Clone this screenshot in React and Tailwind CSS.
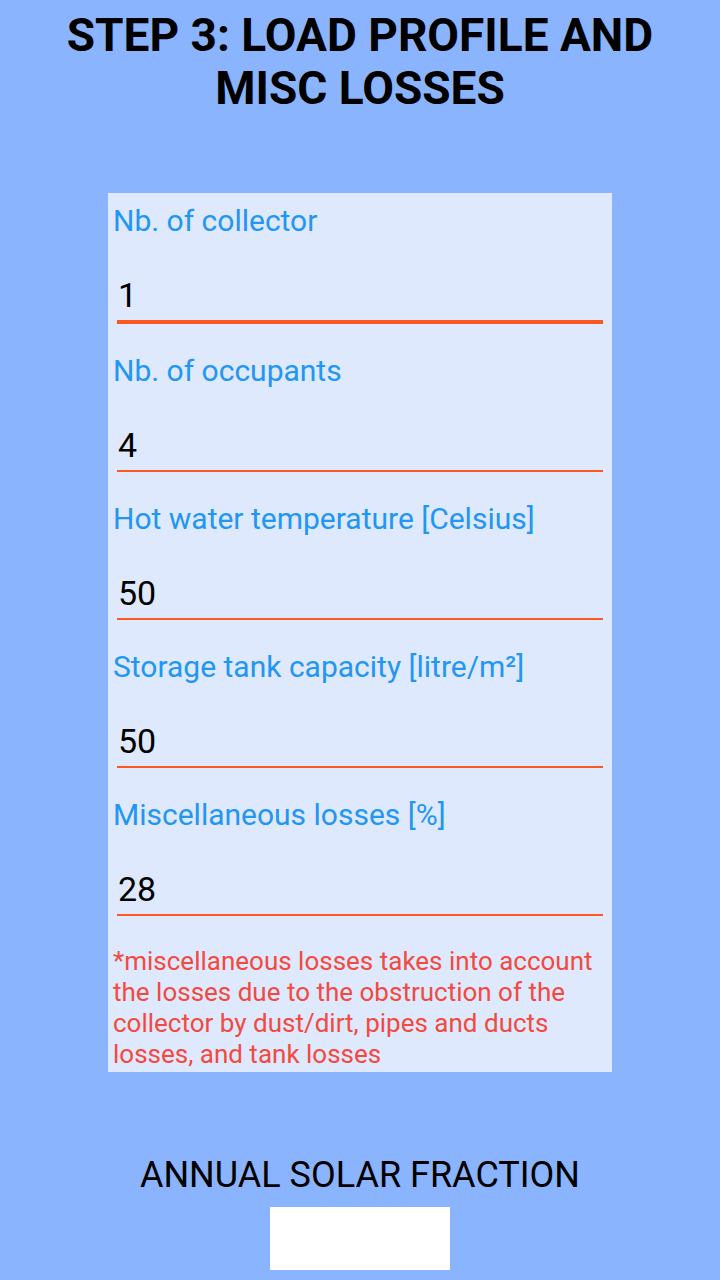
const fields = [
  { label: "Nb. of collector", value: "1", focused: true },
  { label: "Nb. of occupants", value: "4" },
  { label: "Hot water temperature [Celsius]", value: "50" },
  { label: "Storage tank capacity [litre/m²]", value: "50" },
  { label: "Miscellaneous losses [%]", value: "28" },
];

function Field({ label, value, focused }) {
  return (
    <div className="mb-[30px]">
      <p className="pl-[5px] text-[30px] leading-[33px] text-[#2196f3]">
        {label}
      </p>
      <div
        className={
          focused
            ? "mx-[9px] mt-[38px] border-b-[4px] border-[#ff5722] pb-[5px]"
            : "mx-[9px] mt-[38px] border-b-2 border-[#ff5722] pb-[5px]"
        }
      >
        <p className="pl-[1px] text-[34px] leading-[40px] text-black">
          {value}
        </p>
      </div>
    </div>
  );
}

export default function App() {
  return (
    <div
      className="flex min-h-[1280px] w-full flex-col items-center bg-[#8ab4fe]"
      style={{ fontFamily: "Roboto, 'Noto Sans', sans-serif" }}
    >
      <h1 className="pt-[9px] text-center text-[46px] font-bold leading-[53px] text-black">
        STEP 3: LOAD PROFILE AND
        <br />
        MISC LOSSES
      </h1>

      <div className="mt-[78px] w-[504px] bg-[#dee9fd] pt-[11px] pb-[2px]">
        {fields.map((field) => (
          <Field key={field.label} {...field} />
        ))}

        <p className="px-[5px] text-[26px] leading-[31px] text-[#f4493f]">
          *miscellaneous losses takes into account the losses due to the
          obstruction of the collector by dust/dirt, pipes and ducts losses,
          and tank losses
        </p>
      </div>

      <p className="mt-[83px] text-[36px] leading-[40px] text-black">
        ANNUAL SOLAR FRACTION
      </p>
      <div className="mt-[12px] h-[63px] w-[180px] bg-white" />
    </div>
  );
}
